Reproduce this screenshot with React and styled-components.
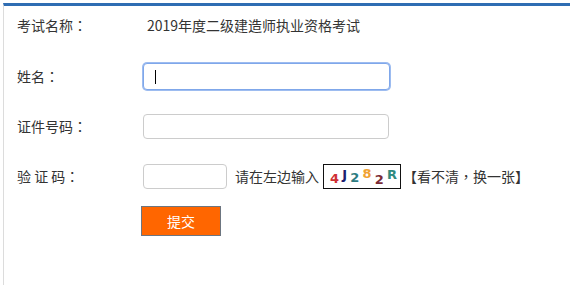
import styled, { createGlobalStyle } from "styled-components";

const GlobalStyle = createGlobalStyle`
  html, body {
    margin: 0;
    padding: 0;
    background: #fff;
  }
  body {
    font-family: "Noto Sans CJK SC", "Microsoft YaHei", sans-serif;
    font-size: 14px;
    color: #333;
  }
`;

const captchaChars = [
  { ch: "4", color: "#cf2f34", dy: 2 },
  { ch: "J", color: "#1c2070", dy: -2 },
  { ch: "2", color: "#2f7c82", dy: 1 },
  { ch: "8", color: "#f0a232", dy: -3 },
  { ch: "2", color: "#7a2c36", dy: 3 },
  { ch: "R", color: "#2f8a7f", dy: -2 },
];

export default function App() {
  return (
    <>
      <GlobalStyle />
      <Panel>
        <Row $h={38}>
          <Label>考试名称<Punct>：</Punct></Label>
          <Value>2019年度二级建造师执业资格考试</Value>
        </Row>
        <Row $h={50} $mt={7}>
          <Label>姓名<Punct>：</Punct></Label>
          <Field>
            <TextInput $focused $w={247} $h={27} />
            <Caret />
          </Field>
        </Row>
        <Row $h={50}>
          <Label>证件号码<Punct>：</Punct></Label>
          <TextInput $w={246} $h={25} />
        </Row>
        <Row $h={50}>
          <Label>验 证 码<Punct>：</Punct></Label>
          <TextInput $w={84} $h={25} />
          <Hint>请在左边输入</Hint>
          <Captcha>
            {captchaChars.map((c, i) => (
              <CaptchaChar key={i} $color={c.color} $dy={c.dy}>
                {c.ch}
              </CaptchaChar>
            ))}
          </Captcha>
          <Refresh>【看不清<Punct>，</Punct>换一张】</Refresh>
        </Row>
        <Row $h={30} $mt={5}>
          <Spacer />
          <Submit>提交</Submit>
        </Row>
      </Panel>
    </>
  );
}

const Panel = styled.div`
  margin: 3px 0 0 3px;
  min-height: calc(100vh - 3px);
  box-sizing: border-box;
  border-top: 3px solid #2f6db3;
  border-left: 1px solid #dcdcdc;
  padding-left: 13px;
`;

const Row = styled.div`
  display: flex;
  align-items: center;
  height: ${(p) => p.$h}px;
  margin-top: ${(p) => p.$mt || 0}px;
`;

const Label = styled.div`
  width: 126px;
  flex: none;
  color: #333;
  white-space: pre;
`;

const Punct = styled.span`
  font-family: "Noto Sans CJK TC", "Noto Sans CJK SC", sans-serif;
`;

const Spacer = styled.div`
  width: 125px;
  flex: none;
`;

const Value = styled.div`
  padding-left: 4px;
  color: #333;
`;

const Field = styled.div`
  position: relative;
  display: flex;
`;

const TextInput = styled.input`
  box-sizing: border-box;
  width: ${(p) => p.$w}px;
  height: ${(p) => p.$h}px;
  margin: 0;
  padding: 0 8px;
  border: 1px solid ${(p) => (p.$focused ? "#7fa7ea" : "#cccccc")};
  border-radius: 4px;
  box-shadow: ${(p) => (p.$focused ? "0 0 0 1px #9dbcf0" : "none")};
  outline: none;
  background: #fff;
  font-family: inherit;
  font-size: 14px;
`;

const Caret = styled.span`
  position: absolute;
  left: 12px;
  top: 7px;
  width: 1px;
  height: 14px;
  background: #000;
`;

const Hint = styled.span`
  margin-left: 8px;
  color: #333;
`;

const Captcha = styled.div`
  box-sizing: border-box;
  display: flex;
  align-items: center;
  justify-content: space-between;
  width: 78px;
  height: 25px;
  margin-left: 4px;
  padding: 0 3px 0 6px;
  border: 1px solid #111;
  background: #fff;
`;

const CaptchaChar = styled.span`
  font-family: "DejaVu Sans", sans-serif;
  font-weight: bold;
  font-size: 13px;
  color: ${(p) => p.$color};
  transform: translateY(${(p) => p.$dy}px);
  line-height: 1;
`;

const Refresh = styled.span`
  margin-left: 2px;
  color: #333;
`;

const Submit = styled.button`
  box-sizing: border-box;
  width: 80px;
  height: 30px;
  margin-left: -1px;
  padding: 0;
  border: 1px solid #6c7580;
  background: #ff6600;
  color: #fff;
  font-family: inherit;
  font-size: 14px;
  cursor: pointer;
`;
